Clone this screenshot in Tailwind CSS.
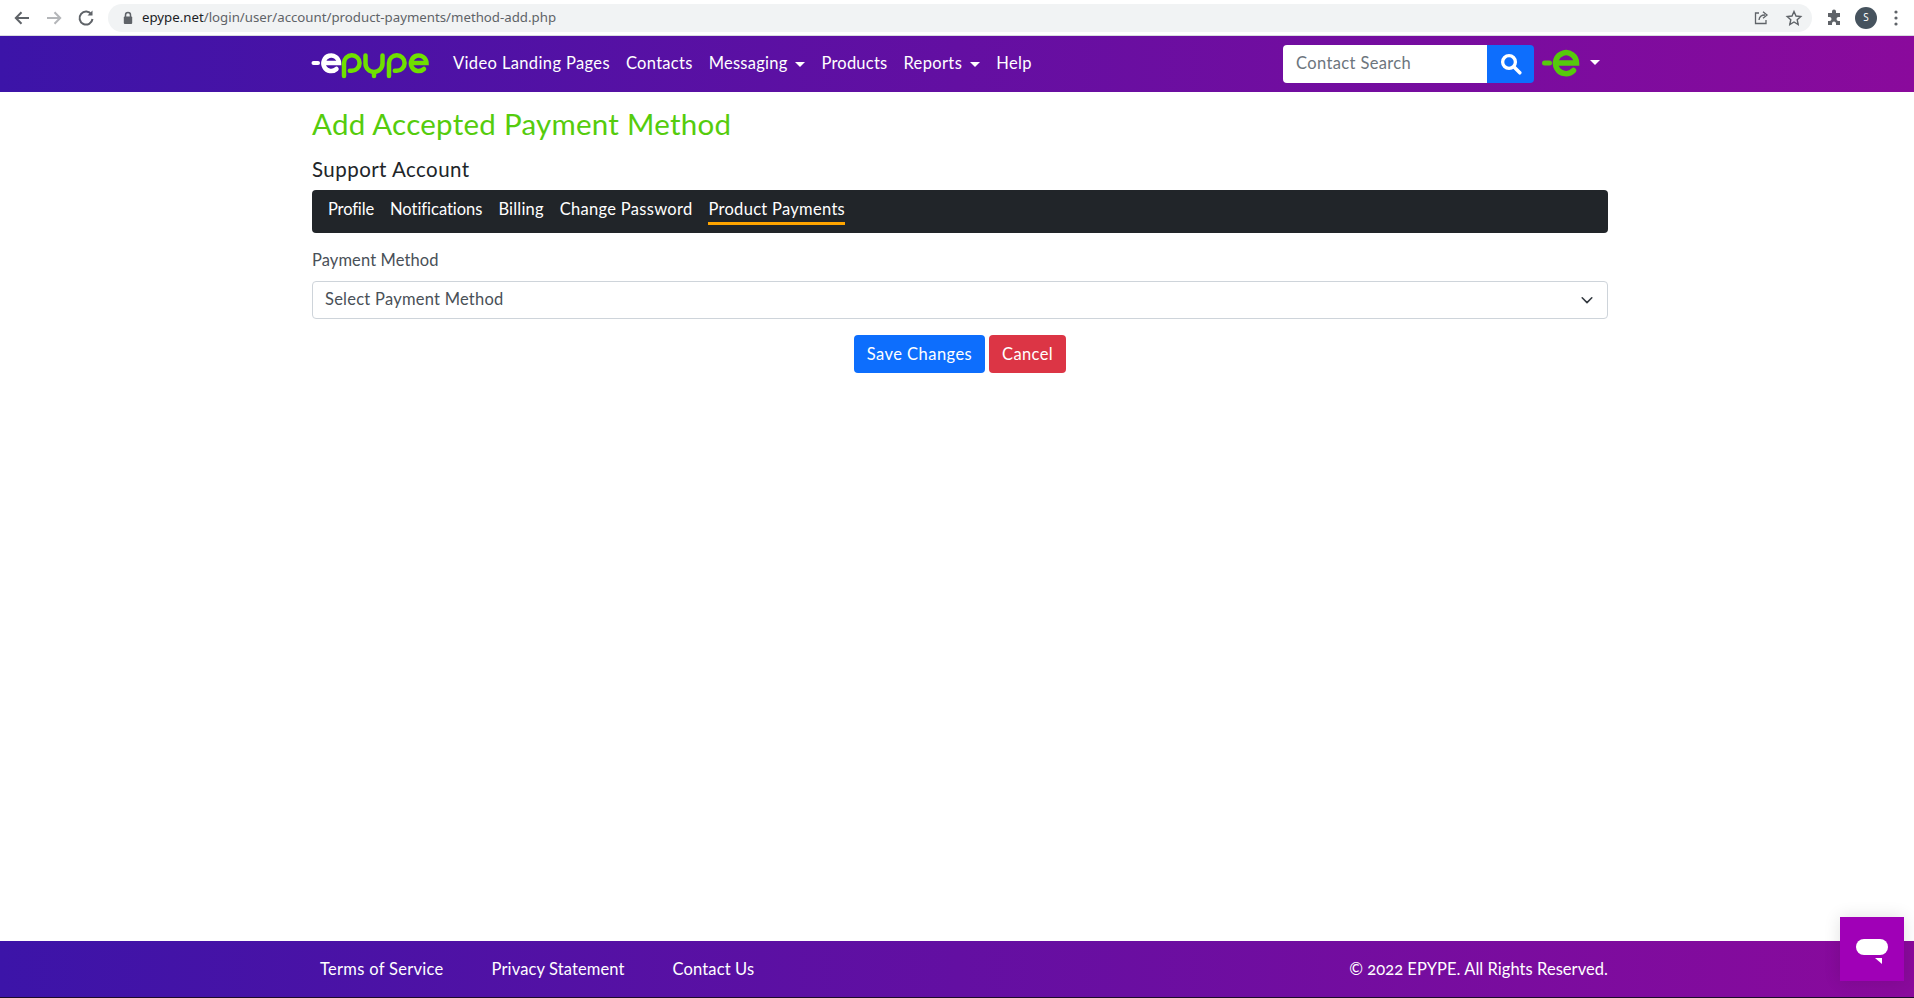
<!DOCTYPE html>
<html lang="en">
<head>
<meta charset="utf-8">
<title>Add Accepted Payment Method</title>
<script src="https://cdn.jsdelivr.net/npm/@tailwindcss/browser@4"></script>
</head>
<body class="bg-white overflow-hidden">
<div class="relative h-[998px] flex flex-col font-['Lato','Liberation_Sans',sans-serif] text-[16.5px] text-[#212529] tracking-[0.37px]">
  <!-- browser chrome -->
  <div class="h-[36px] shrink-0 flex items-center bg-white border-b border-[#dadce0] font-['Noto_Sans',sans-serif] tracking-normal">
    <div class="w-[108px] shrink-0 flex items-center pl-[12px] gap-[12px]">
      <svg class="w-[20px] h-[20px]" viewBox="0 0 20 20" fill="none" stroke="#5f6368" stroke-width="2"><path d="M17 10H4M9.5 4.2 3.8 10l5.7 5.8"/></svg>
      <svg class="w-[20px] h-[20px]" viewBox="0 0 20 20" fill="none" stroke="#b4b6b9" stroke-width="2"><path d="M3 10h13M10.500 4.200 16.200 10l-5.700 5.800"/></svg>
      <svg class="w-[20px] h-[20px]" viewBox="0 0 20 20" fill="none" stroke="#5f6368" stroke-width="2"><path d="M15.500 6.500A6.500 6.500 0 1 0 16.500 11"/><path d="M16.500 2.500v5h-5" fill="#5f6368" stroke="none"/></svg>
    </div>
    <div class="w-[1704px] h-[28px] flex items-center rounded-full bg-[#f1f3f4] pl-[14px] pr-[9px]">
      <svg class="w-[12px] h-[14px] mr-[8px] shrink-0" viewBox="0 0 12 14"><path d="M3.500 6V4a2.500 2.500 0 0 1 5 0v2" fill="none" stroke="#5f6368" stroke-width="1.500"/><rect x="1.800" y="5.500" width="8.400" height="7.500" rx="1" fill="#5f6368"/></svg>
      <div class="text-[13.250px] text-[#5f6368] whitespace-nowrap"><span class="text-[#202124]">epype.net</span>/login/user/account/product-payments/method-add.php</div>
      <div class="ml-auto flex items-center gap-[15px]">
        <svg class="w-[18px] h-[18px]" viewBox="0 0 18 18" fill="none" stroke="#5f6368" stroke-width="1.300"><path d="M7 4H3.500v10.500h10.500V11"/><path d="M7 11c.3-3.500 2.500-5 6-5M11 2.800 15 6l-4 3.200" /></svg>
        <svg class="w-[18px] h-[18px]" viewBox="0 0 18 18" fill="none" stroke="#5f6368" stroke-width="1.400"><path d="M9 2.500l2 4.500 4.800.5-3.600 3.200 1 4.800L9 13l-4.200 2.500 1-4.800L2.200 7.500 7 7z"/></svg>
      </div>
    </div>
    <div class="flex items-center ml-[13px] gap-[12px]">
      <svg class="w-[18px] h-[18px]" viewBox="0 0 18 18" fill="#5f6368"><path d="M7 2.500a2 2 0 0 1 4 0V4h4v4h-1.500a2 2 0 0 0 0 4H15v4h-4v-1.500a2 2 0 0 0-4 0V16H3v-4h1.500a2 2 0 0 0 0-4H3V4h4z"/></svg>
      <div class="w-[22px] h-[22px] rounded-full bg-[#46535e] text-white text-[10px] flex items-center justify-center">S</div>
      <svg class="w-[4px] h-[16px] ml-[5px]" viewBox="0 0 4 16" fill="#5f6368"><circle cx="2" cy="2" r="1.600"/><circle cx="2" cy="8" r="1.600"/><circle cx="2" cy="14" r="1.600"/></svg>
    </div>
  </div>

  <!-- navbar -->
  <nav class="h-[56px] shrink-0 bg-linear-to-r/srgb from-[#3c14a8] to-[#8a0a9c]">
    <div class="w-[1296px] h-full ml-[312px] flex items-center">
      <svg class="w-[117px] h-[26px] shrink-0 mt-[4px] overflow-visible" viewBox="0 0 117 26" fill="none" stroke-linecap="round">
        <path d="M1.500 10h4.500" stroke="#fff" stroke-width="4"/>
        <path d="M11.500 10h15.500a7.800 7.800 0 1 0-2.500 6" stroke="#fff" stroke-width="4.500"/>
        <path d="M32 23V10a7.800 7.800 0 1 1 7.800 7.800h-2" stroke="#6fe000" stroke-width="4.500"/>
        <path d="M53.500 2.500v8a8.500 8.500 0 0 0 17 0v-8M62 19v4" stroke="#6fe000" stroke-width="4.500"/>
        <path d="M77 23V10a7.800 7.800 0 1 1 7.800 7.800h-2" stroke="#6fe000" stroke-width="4.500"/>
        <path d="M99 10h15.500a7.800 7.800 0 1 0-2.500 6" stroke="#6fe000" stroke-width="4.500"/>
      </svg>
      <div class="flex items-center gap-[16px] ml-[24px] -mt-[2px] text-white">
        <span>Video Landing Pages</span>
        <span class="tracking-[0.3px]">Contacts</span>
        <span class="flex items-center gap-[8px] tracking-[0.24px]">Messaging<span class="w-0 h-0 mt-[2px] border-x-[5px] border-x-transparent border-t-[5px] border-t-white"></span></span>
        <span class="tracking-[0.22px]">Products</span>
        <span class="flex items-center gap-[8px]">Reports<span class="w-0 h-0 mt-[2px] border-x-[5px] border-x-transparent border-t-[5px] border-t-white"></span></span>
        <span>Help</span>
      </div>
      <div class="ml-auto mr-[8px] flex items-center">
        <div class="w-[204px] h-[38px] bg-white rounded-l-[4px] flex items-center pl-[13px] pb-[2px] text-[#6c757d]">Contact Search</div>
        <div class="w-[47px] h-[38px] bg-[#0d6efd] rounded-r-[4px] flex items-center justify-center">
          <svg class="w-[22px] h-[22px]" viewBox="0 0 20 20" fill="none" stroke="#fff" stroke-linecap="round"><circle cx="8.200" cy="8.200" r="5.800" stroke-width="3"/><path d="M13 13l5 5" stroke-width="3.200"/></svg>
        </div>
        <svg class="w-[38px] h-[28px] ml-[8px] mb-[3px]" viewBox="0 0 38 28" fill="none" stroke="#56c90c" stroke-linecap="round"><path d="M2.500 14h5" stroke-width="5"/><path d="M14 14h20.500a10.500 10.500 0 1 0-3 7.500" stroke-width="5.500"/></svg>
        <span class="w-0 h-0 ml-[10px] mb-[4px] border-x-[5px] border-x-transparent border-t-[5px] border-t-white"></span>
      </div>
    </div>
  </nav>

  <!-- main -->
  <main class="w-[1296px] ml-[312px] grow">
    <h1 class="mt-[15px] text-[29.500px] leading-[34px] tracking-[0.26px] text-[#55cc0d]">Add Accepted Payment Method</h1>
    <h2 class="mt-[16px] text-[20.500px] leading-[24px] tracking-[0.45px]">Support Account</h2>
    <div class="mt-[9px] h-[43px] pb-[5px] bg-[#212529] rounded-[4px] flex items-center gap-[16px] px-[16px] text-white">
      <span class="tracking-[-0.13px]">Profile</span>
      <span class="tracking-[-0.03px]">Notifications</span>
      <span class="tracking-[0.2px]">Billing</span>
      <span class="tracking-[0.29px]">Change Password</span>
      <span class="relative tracking-[0.3px]">Product Payments<span class="absolute left-0 right-0 -bottom-[4px] h-[3px] bg-[#ffa500]"></span></span>
    </div>
    <label class="block mt-[15px] text-[#495057] leading-[24px] tracking-[0.1px]">Payment Method</label>
    <div class="mt-[9px] h-[38px] border border-[#ced4da] rounded-[4px] flex items-center justify-between pl-[12px] pr-[13px] pb-[2px] text-[#495057]">
      <span class="tracking-[0.25px]">Select Payment Method</span>
      <svg class="w-[14px] h-[14px] mt-[2px]" viewBox="0 0 16 16" fill="none" stroke="#343a40" stroke-width="1.800" stroke-linecap="round" stroke-linejoin="round"><path d="M2.500 5.500 8 11l5.500-5.500"/></svg>
    </div>
    <div class="mt-[16px] flex justify-center gap-[4px] text-white">
      <div class="h-[38px] w-[131px] bg-[#0d6efd] rounded-[4px] flex items-center justify-center tracking-[0.45px]">Save Changes</div>
      <div class="h-[38px] w-[77px] bg-[#dc3545] rounded-[4px] flex items-center justify-center">Cancel</div>
    </div>
  </main>

  <!-- footer -->
  <footer class="h-[57px] shrink-0 bg-linear-to-r/srgb from-[#3c14a8] to-[#8a0a9c] border-b border-[#1c0a2a] text-white">
    <div class="w-[1296px] h-full ml-[312px] flex items-center pl-[8px]">
      <div class="flex gap-[48px]">
        <span class="tracking-[0.3px]">Terms of Service</span>
        <span class="tracking-[0.12px]">Privacy Statement</span>
        <span class="tracking-[0.13px]">Contact Us</span>
      </div>
      <span class="ml-auto tracking-[0.05px] [font-variant-numeric:oldstyle-nums]">© 2022 EPYPE. All Rights Reserved.</span>
    </div>
  </footer>

  <!-- chat launcher -->
  <div class="absolute left-[1840px] top-[917px] w-[64px] h-[64px] bg-[#a000b7] flex items-center justify-center shadow-[0_0_16px_rgba(0,0,0,0.12)]">
    <svg class="w-[32px] h-[26px] mt-[6px]" viewBox="0 0 32 26" fill="#fff"><rect x="0" y="0" width="32" height="16" rx="8"/><path d="M19 19h7v6z"/></svg>
  </div>
</div>
</body>
</html>
